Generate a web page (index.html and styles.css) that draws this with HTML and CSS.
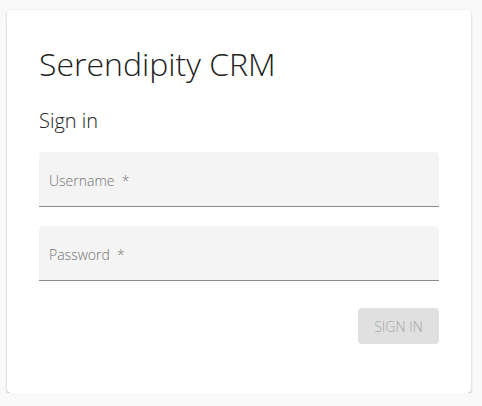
FILE: index.html
```html
<!DOCTYPE html>
<html>
<head>
<meta charset="utf-8">
<link rel="stylesheet" href="styles.css">
</head>
<body>
<div class="card">
  <h1 class="title">Serendipity CRM</h1>
  <h2 class="subtitle">Sign in</h2>
  <form class="form">
    <label class="field"><span class="label">Username&nbsp; *</span></label>
    <label class="field"><span class="label">Password&nbsp; *</span></label>
    <div class="actions">
      <button type="button" class="btn" disabled>Sign in</button>
    </div>
  </form>
</div>
</body>
</html>
```
FILE: styles.css
```css
html, body {
  margin: 0;
  padding: 0;
  background: #f9f9f9;
}
body {
  padding: 10px 11px 0 7px;
  font-family: "Open Sans", "Liberation Sans", sans-serif;
  font-weight: 300;
  color: #212121;
}
.card {
  width: 464px;
  box-sizing: border-box;
  background: #fff;
  border-radius: 4px;
  padding: 32px 32px 49px;
  box-shadow: 0 1px 3px rgba(0,0,0,0.2), 0 1px 1px rgba(0,0,0,0.14), 0 2px 1px -1px rgba(0,0,0,0.12);
}
.title {
  margin: 0;
  font-size: 32px;
  font-weight: 300;
  line-height: 44px;
}
.subtitle {
  margin: 21px 0 0;
  font-size: 20px;
  font-weight: 300;
  line-height: 27px;
}
.form {
  margin-top: 18px;
  display: flex;
  flex-direction: column;
}
.field {
  display: block;
  box-sizing: border-box;
  background: #f4f4f4;
  border-radius: 4px 4px 0 0;
  border-bottom: 1px solid #8a8a8a;
  height: 55px;
  padding: 17px 10px 0;
}
.field + .field {
  margin-top: 19px;
}
.label {
  font-size: 14px;
  color: #727272;
  line-height: 19px;
}
.actions {
  display: flex;
  justify-content: flex-end;
  margin-top: 27px;
}
.btn {
  width: 81px;
  height: 36px;
  border: none;
  border-radius: 4px;
  background: #e0e0e0;
  color: #a6a6a6;
  font-family: inherit;
  font-weight: 300;
  font-size: 14px;
  text-transform: uppercase;
  padding: 0;
}
```
